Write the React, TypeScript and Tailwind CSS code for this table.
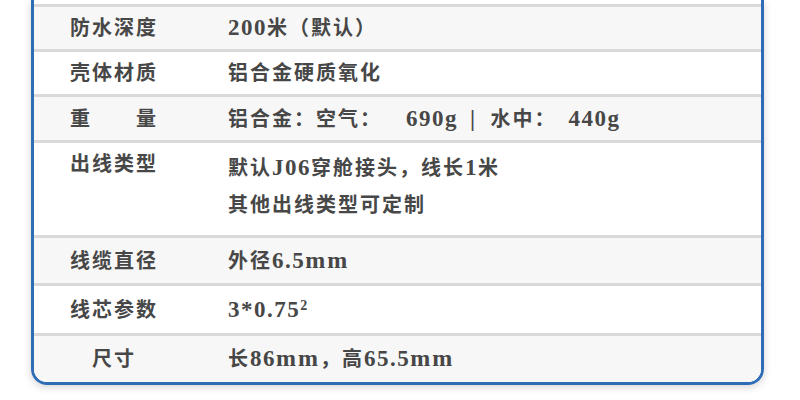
import React from "react";

const font = {
  fontFamily: '"Liberation Serif", "Noto Sans CJK SC", serif',
};

function L({ children }: { children: React.ReactNode }) {
  return <span className="text-[23px] tracking-[1.5px]">{children}</span>;
}

function M() {
  return <span className="text-[24px] tracking-[2px]">mm</span>;
}

function Row({
  label,
  children,
  h,
  gray,
  labelMode = "left",
  top = false,
}: {
  label: React.ReactNode;
  children: React.ReactNode;
  h: string;
  gray?: boolean;
  labelMode?: "left" | "justify" | "center";
  top?: boolean;
}) {
  return (
    <div
      className={`flex border-t-[3px] border-[#d9d9d9] ${h} ${gray ? "bg-[#f7f7f7]" : "bg-white"} ${top ? "items-start pt-[6px]" : "items-center"}`}
    >
      <div
        className={`ml-[36px] w-[88px] flex ${labelMode === "justify" ? "justify-between" : labelMode === "center" ? "justify-center" : "justify-start"}`}
      >
        {label}
      </div>
      <div className="ml-[70px] leading-[37px] whitespace-nowrap">{children}</div>
    </div>
  );
}

export default function App() {
  return (
    <div className="w-[800px] h-[400px] bg-white overflow-hidden">
      <div
        className="ml-[31px] w-[733px] border-x-[3px] border-b-[3px] border-[#2f6cb6] rounded-b-[16px] overflow-hidden shadow-[0_2px_8px_rgba(0,0,0,0.18)] text-[20px] font-bold text-[#474747] tracking-[2px]"
        style={font}
      >
        <div className="h-[4px] bg-white" />
        <Row label="防水深度" h="h-[45px]" gray>
          <L>200</L>米（默认）
        </Row>
        <Row label="壳体材质" h="h-[45px]">
          铝合金硬质氧化
        </Row>
        <Row
          label={
            <>
              <span>重</span>
              <span>量</span>
            </>
          }
          labelMode="justify"
          h="h-[46px]"
          gray
        >
          <span>铝合金：空气：</span>
          <span className="ml-[24px]">
            <L>690g</L>
          </span>
          <span className="ml-[12px]">
            <L>|</L>
          </span>
          <span className="ml-[14px]">水中：</span>
          <span className="ml-[12px]">
            <L>440g</L>
          </span>
        </Row>
        <Row label="出线类型" h="h-[95px]" top>
          <div>
            默认<L>J06</L>穿舱接头，线长<L>1</L>米
          </div>
          <div>其他出线类型可定制</div>
        </Row>
        <Row label="线缆直径" h="h-[48px]" gray>
          外径<L>6.5</L>
          <M />
        </Row>
        <Row label="线芯参数" h="h-[50px]">
          <L>3*0.75</L>
          <span className="inline-block align-top text-[14px] leading-[14px] tracking-normal mt-[8px]">2</span>
        </Row>
        <Row label="尺寸" labelMode="center" h="h-[49px]" gray>
          长<L>86</L>
          <M />，高<L>65.5</L>
          <M />
        </Row>
      </div>
    </div>
  );
}
